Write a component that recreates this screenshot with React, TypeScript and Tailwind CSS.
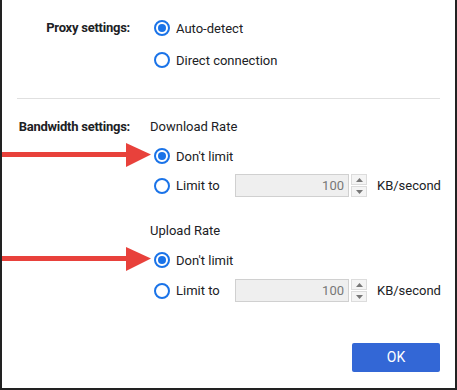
import type { ReactNode } from "react";

// ─── Small pieces ───

function Radio({ checked, label }: { checked?: boolean; label: string }) {
	return (
		<div className="flex items-center h-5 pl-[4px]">
			<span className="w-4 h-4 rounded-full border-2 border-[#1a73e8] flex items-center justify-center shrink-0">
				{checked && <span className="w-2 h-2 rounded-full bg-[#1a73e8]" />}
			</span>
			<span className="ml-[6px] leading-none whitespace-nowrap">{label}</span>
		</div>
	);
}

function RateLimit() {
	return (
		<div className="flex items-center h-[23px]">
			<div className="w-[85px]">
				<Radio label="Limit to" />
			</div>
			<div className="w-[114px] h-[23px] bg-[#efefef] border border-[#d0d0d0] flex items-center justify-end pr-[4px] text-[#777]">
				100
			</div>
			<div className="ml-[2px] w-[16px] h-[23px] flex flex-col gap-[1px]">
				<div className="flex-1 bg-[#f4f4f4] border border-[#dcdcdc] flex items-center justify-center">
					<svg width="7" height="4" viewBox="0 0 7 4">
						<path d="M0 4 L3.5 0 L7 4 Z" fill="#777" />
					</svg>
				</div>
				<div className="flex-1 bg-[#f4f4f4] border border-[#dcdcdc] flex items-center justify-center">
					<svg width="7" height="4" viewBox="0 0 7 4">
						<path d="M0 0 L3.5 4 L7 0 Z" fill="#777" />
					</svg>
				</div>
			</div>
			<span className="ml-[10px]">KB/second</span>
		</div>
	);
}

function Row({ label, children }: { label?: string; children: ReactNode }) {
	return (
		<div className="flex">
			<div className="w-[113px] shrink-0 text-right font-bold tracking-[-0.25px] h-5 flex items-center justify-end whitespace-nowrap">
				{label}
			</div>
			<div className="ml-[20px] flex-1">{children}</div>
		</div>
	);
}

function Arrow({ top }: { top: number }) {
	return (
		<svg className="absolute left-0" style={{ top }} width="150" height="26" viewBox="0 0 150 26">
			<rect x="0" y="9" width="126" height="5" fill="#e8413b" />
			<path d="M124 0 L149 11.5 L124 24 Z" fill="#e8413b" />
		</svg>
	);
}

export default function App() {
	return (
		<div className="relative w-[457px] h-[390px] bg-white border-l-2 border-r-2 border-b-2 border-[#222] font-['Roboto',sans-serif] text-[13px] text-[#202124] overflow-hidden">
			<div className="pl-[15px] pr-[15px] pt-[18px]">
				{/* Proxy */}
				<Row label="Proxy settings:">
					<Radio checked label="Auto-detect" />
					<div className="mt-[12px]">
						<Radio label="Direct connection" />
					</div>
				</Row>

				<div className="mt-[28px] h-px bg-[#e0e0e0]" />

				{/* Bandwidth */}
				<div className="mt-[18px]">
					<Row label="Bandwidth settings:">
						<div className="h-5 flex items-center">Download Rate</div>
						<div className="mt-[9px]">
							<Radio checked label="Don't limit" />
						</div>
						<div className="mt-[8px]">
							<RateLimit />
						</div>
						<div className="mt-[24px] h-5 flex items-center">Upload Rate</div>
						<div className="mt-[9px]">
							<Radio checked label="Don't limit" />
						</div>
						<div className="mt-[9px]">
							<RateLimit />
						</div>
					</Row>
				</div>

				<div className="mt-[41px] flex justify-end">
					<button type="button" className="w-[88px] h-[29px] rounded-[2px] bg-[#3367d6] text-white text-[14px]">
						OK
					</button>
				</div>
			</div>

			<Arrow top={143} />
			<Arrow top={247} />
		</div>
	);
}
